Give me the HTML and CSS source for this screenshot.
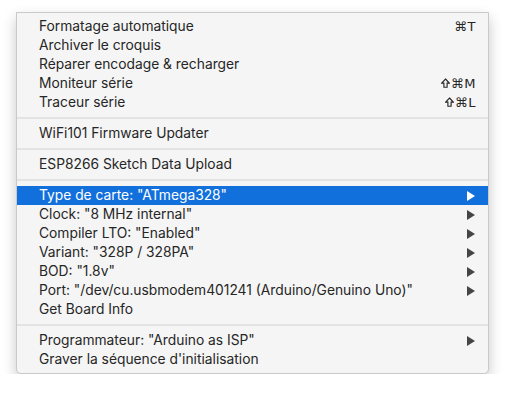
FILE: index.html
```html
<!DOCTYPE html>
<html>
<head>
<meta charset="utf-8">
<link rel="stylesheet" href="styles.css">
</head>
<body>
<div class="menu">
  <div class="item"><span class="label">Formatage automatique</span><span class="key">⌘T</span></div>
  <div class="item"><span class="label">Archiver le croquis</span></div>
  <div class="item"><span class="label">Réparer encodage &amp; recharger</span></div>
  <div class="item"><span class="label">Moniteur série</span><span class="key"><svg class="shift" width="9" height="10" viewBox="0 0 9 10"><path d="M4.5 1 L8.3 5.1 H6.1 V9.2 H2.9 V5.1 H0.7 Z" fill="none" stroke="#262626" stroke-width="1.15"/></svg>⌘M</span></div>
  <div class="item"><span class="label">Traceur série</span><span class="key"><svg class="shift" width="9" height="10" viewBox="0 0 9 10"><path d="M4.5 1 L8.3 5.1 H6.1 V9.2 H2.9 V5.1 H0.7 Z" fill="none" stroke="#262626" stroke-width="1.15"/></svg>⌘L</span></div>
  <div class="sep"></div>
  <div class="item"><span class="label">WiFi101 Firmware Updater</span></div>
  <div class="sep"></div>
  <div class="item"><span class="label">ESP8266 Sketch Data Upload</span></div>
  <div class="sep"></div>
  <div class="item active"><span class="label">Type de carte: "ATmega328"</span><span class="arrow"></span></div>
  <div class="item"><span class="label">Clock: "8 MHz internal"</span><span class="arrow"></span></div>
  <div class="item"><span class="label">Compiler LTO: "Enabled"</span><span class="arrow"></span></div>
  <div class="item"><span class="label">Variant: "328P / 328PA"</span><span class="arrow"></span></div>
  <div class="item"><span class="label">BOD: "1.8v"</span><span class="arrow"></span></div>
  <div class="item"><span class="label">Port: "/dev/cu.usbmodem401241 (Arduino/Genuino Uno)"</span><span class="arrow"></span></div>
  <div class="item"><span class="label">Get Board Info</span></div>
  <div class="sep"></div>
  <div class="item"><span class="label">Programmateur: "Arduino as ISP"</span><span class="arrow"></span></div>
  <div class="item"><span class="label">Graver la séquence d'initialisation</span></div>
</div>
</body>
</html>
```

FILE: styles.css
```css
html, body {
  margin: 0;
  padding: 0;
  background: #ffffff;
}

body {
  font-family: Inter, "Liberation Sans", Arial, sans-serif;
  font-size: 13.8px;
  color: #262626;
}

.menu {
  box-sizing: border-box;
  margin: 12px 0 0 16px;
  width: 473px;
  padding: 4px 0 4px 0;
  background: #f5f5f5;
  border: 1px solid #c9c9c9;
  border-radius: 0 0 5px 5px;
  box-shadow: 0 6px 14px rgba(0, 0, 0, 0.22);
}

.item {
  box-sizing: border-box;
  display: flex;
  align-items: center;
  justify-content: space-between;
  height: 19px;
  padding: 0 12px 1px 22px;
}

.item.active {
  background: #1170dc;
  color: #ffffff;
}

.label {
  white-space: nowrap;
}

.key {
  display: flex;
  align-items: center;
  font-family: "DejaVu Sans", sans-serif;
  font-size: 13px;
  color: #262626;
  letter-spacing: 0.5px;
}

.shift {
  margin-right: 1px;
}

.arrow {
  width: 0;
  height: 0;
  margin: 1px 1px 0 0;
  border-top: 5px solid transparent;
  border-bottom: 5px solid transparent;
  border-left: 8px solid #454545;
}

.item.active .arrow {
  border-left-color: #ffffff;
}

.sep {
  height: 2px;
  margin: 5px 0;
  background: #e3e3e3;
}
```
